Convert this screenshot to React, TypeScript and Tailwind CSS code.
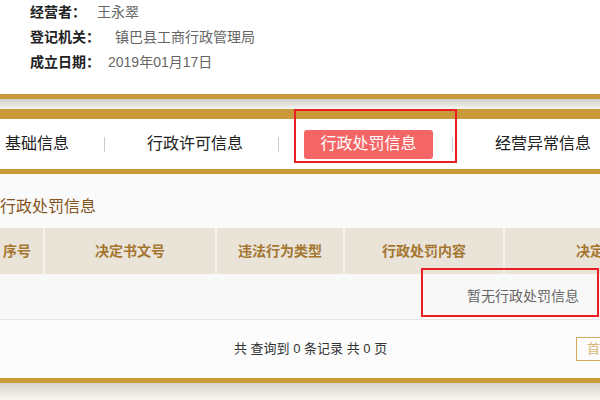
import React from 'react';

const infoRows = [
  { label: '经营者：', value: '王永翠', gap: 'ml-[11px]' },
  { label: '登记机关：', value: '镇巴县工商行政管理局', gap: 'ml-[15px]' },
  { label: '成立日期：', value: '2019年01月17日', gap: 'ml-[8px]' },
];

const columns = [
  { title: '序号', width: 'w-[52px]' },
  { title: '决定书文号', width: 'w-[172px]' },
  { title: '违法行为类型', width: 'w-[128px]' },
  { title: '行政处罚内容', width: 'w-[160px]' },
  { title: '决定日期', width: 'w-[200px]' },
];

const App: React.FC = () => {
  return (
    <div className="relative w-[600px] h-[400px] overflow-hidden bg-[#fafafa] font-['Liberation_Sans','Noto_Sans_CJK_SC',sans-serif]">
      {/* 基本信息 */}
      <div className="h-[94px] bg-white pl-[30px] text-[14px] leading-[25px]">
        {infoRows.map((row) => (
          <div key={row.label} className="flex">
            <span className="font-bold text-[#222]">{row.label}</span>
            <span className={`${row.gap} text-[#666]`}>{row.value}</span>
          </div>
        ))}
      </div>
      <div className="h-[5px] bg-[#c99a3a]" />
      <div className="h-[10px] bg-gradient-to-b from-[#cfcdc8] to-[#f7f5f0]" />
      <div className="h-[10px] bg-[#c99a3a]" />

      {/* Tabs */}
      <div className="h-[50px] bg-white flex items-center text-[16px] text-[#222]">
        <span className="ml-[5px]">基础信息</span>
        <span className="ml-[35px] w-px h-[15px] bg-[#cccccc]" />
        <span className="ml-[42px]">行政许可信息</span>
        <span className="ml-[35px] w-px h-[15px] bg-[#cccccc]" />
        <span className="ml-[25px] w-[129px] h-[29px] rounded-[3px] bg-[#f46666] text-white flex items-center justify-center">
          行政处罚信息
        </span>
        <span className="ml-[19px] w-px h-[15px] bg-[#cccccc]" />
        <span className="ml-[42px] whitespace-nowrap">经营异常信息</span>
      </div>
      <div className="h-[5px] bg-[#c99a3a]" />

      {/* 行政处罚信息 */}
      <div className="h-[54px] pt-[23px] text-[16px] leading-[20px] text-[#85531f]">行政处罚信息</div>
      <div className="h-[46px] bg-[#e9e3d8] flex -ml-[9px] w-[712px] text-[14px] font-bold text-[#a47630]">
        {columns.map((col, i) => (
          <div
            key={col.title}
            className={`${col.width} shrink-0 flex items-center justify-center ${i > 0 ? 'border-l-2 border-[#f5f2ec]' : ''}`}
          >
            {col.title}
          </div>
        ))}
      </div>
      <div className="h-[46px] bg-[#f8f8f8] border-b border-[#e6e6e6] flex items-center pl-[467px] text-[14px] text-[#666]">
        暂无行政处罚信息
      </div>
      <div className="h-[58px] bg-[#fcfcfc] flex items-center">
        <div className="w-[576px] shrink-0 pl-[234px] text-[13px] text-[#333] whitespace-nowrap">共 查询到 0 条记录 共 0 页</div>
        <div className="w-[40px] h-[24px] shrink-0 border border-[#d6a95e] text-[#d9b47a] text-[13px] flex items-center pl-[10px]">
          首
        </div>
      </div>
      <div className="h-[5px] bg-[#c99a3a]" />
      <div className="h-[17px] bg-gradient-to-b from-[#d6d4cf] to-[#f9f6ee]" />

      {/* 标注框 */}
      <div className="absolute left-[294px] top-[109px] w-[163px] h-[54px] border-2 border-[#e81e25]" />
      <div className="absolute left-[421px] top-[268px] w-[178px] h-[49px] border-2 border-[#e81e25]" />
    </div>
  );
};

export default App;
